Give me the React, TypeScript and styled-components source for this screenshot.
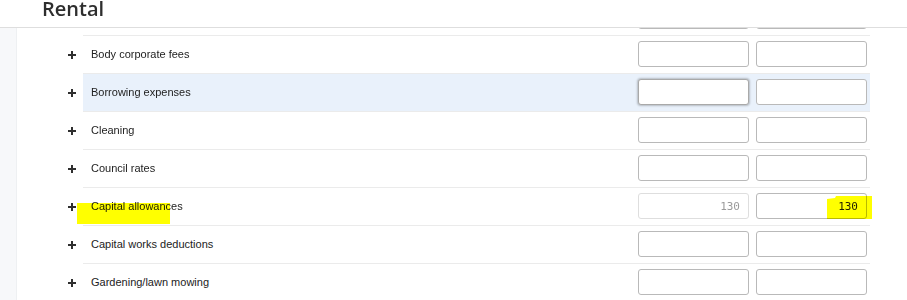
import React, { useLayoutEffect, useRef } from 'react';
import styled, { createGlobalStyle, css } from 'styled-components';

const GlobalStyle = createGlobalStyle`
  html, body {
    margin: 0;
    padding: 0;
    background: #fff;
    font-family: "Liberation Sans", Arial, sans-serif;
  }
`;

interface Expense {
  label: string;
  owner?: string;
  total?: string;
  locked?: boolean;
  active?: boolean;
  marked?: boolean;
}

const expenses: Expense[] = [
  { label: 'Advertising for tenants' },
  { label: 'Body corporate fees' },
  { label: 'Borrowing expenses', active: true },
  { label: 'Cleaning' },
  { label: 'Council rates' },
  { label: 'Capital allowances', owner: '130', total: '130', locked: true, marked: true },
  { label: 'Capital works deductions' },
  { label: 'Gardening/lawn mowing' },
  { label: 'Insurance' },
];

const PlusIcon = () => (
  <svg width="8" height="8" viewBox="0 0 8 8" aria-hidden="true">
    <rect x="3" y="0" width="2" height="8" fill="#2f2f2f" />
    <rect x="0" y="3" width="8" height="2" fill="#2f2f2f" />
  </svg>
);

const App: React.FC = () => {
  const scrollRef = useRef<HTMLDivElement>(null);

  // the list is scrolled a little, so the first row sits under the header
  useLayoutEffect(() => {
    if (scrollRef.current) scrollRef.current.scrollTop = 31;
  }, []);

  return (
    <>
      <GlobalStyle />
      <Page>
        <Header>
          <Title>Rental</Title>
        </Header>
        <Body>
          <Sidebar />
          <Scroll ref={scrollRef}>
            <List>
              {expenses.map((item) => (
                <Item key={item.label}>
                  <Toggle>
                    <PlusIcon />
                  </Toggle>
                  <Row $active={item.active}>
                    <Label>{item.label}</Label>
                    <Inputs>
                      <Amount
                        type="text"
                        readOnly
                        value={item.owner ?? ''}
                        $locked={item.locked}
                        $focused={item.active}
                      />
                      <Amount type="text" readOnly value={item.total ?? ''} />
                    </Inputs>
                    {item.marked && (
                      <>
                        <LabelMark />
                        <ValueMark />
                      </>
                    )}
                  </Row>
                </Item>
              ))}
            </List>
          </Scroll>
        </Body>
      </Page>
    </>
  );
};

const Page = styled.div`
  display: flex;
  flex-direction: column;
  height: 300px;
  overflow: hidden;
`;

const Header = styled.header`
  height: 27px;
  padding-left: 42px;
  border-bottom: 1px solid #dedede;
  background: #fff;
`;

const Title = styled.h1`
  margin: 0;
  font-family: "Open Sans", "Liberation Sans", sans-serif;
  font-size: 20px;
  font-weight: 600;
  line-height: 17px;
  color: #2e2e2e;
`;

const Body = styled.div`
  display: flex;
  flex: 1;
  min-height: 0;
`;

const Sidebar = styled.aside`
  width: 17px;
  flex-shrink: 0;
  background: #f7f8fa;
  border-right: 1px solid #eef0f2;
  box-sizing: border-box;
`;

const Scroll = styled.div`
  flex: 1;
  overflow: hidden;
`;

const List = styled.div`
  display: flex;
  flex-direction: column;
  padding-bottom: 40px;
`;

const Item = styled.div`
  display: flex;
  align-items: stretch;
`;

const Toggle = styled.div`
  width: 66px;
  flex-shrink: 0;
  display: flex;
  align-items: center;
  justify-content: flex-end;
  padding: 2px 7px 0 0;
  box-sizing: border-box;
`;

const Row = styled.div<{ $active?: boolean }>`
  position: relative;
  width: 787px;
  height: 38px;
  box-sizing: border-box;
  display: flex;
  align-items: center;
  padding: 5px 3px 6px 8px;
  border-top: 1px solid #ebebeb;
  background: ${(p) => (p.$active ? '#e9f1fb' : '#fff')};
`;

const Label = styled.span`
  flex: 1;
  font-size: 11px;
  color: #222;
`;

const Inputs = styled.div`
  display: flex;
  gap: 7px;
`;

const Amount = styled.input<{ $locked?: boolean; $focused?: boolean }>`
  width: 111px;
  height: 26px;
  box-sizing: border-box;
  padding: 0 8px;
  border: 1px solid #b9b9b9;
  border-radius: 3px;
  background: #fff;
  outline: none;
  text-align: right;
  font-family: "DejaVu Sans Mono", "Liberation Mono", monospace;
  font-size: 11px;
  color: #222;

  ${(p) =>
    p.$locked &&
    css`
      border-color: #dedede;
      color: #9a9a9a;
    `}

  ${(p) =>
    p.$focused &&
    css`
      border-color: #a9a9a9;
      box-shadow: 0 0 2px 1px rgba(0, 0, 0, 0.22);
    `}
`;

const Mark = styled.span`
  position: absolute;
  background: #ffff00;
  mix-blend-mode: multiply;
  pointer-events: none;
`;

const LabelMark = styled(Mark)`
  left: -6px;
  top: 15px;
  width: 93px;
  height: 21px;
`;

const ValueMark = styled(Mark)`
  left: 744px;
  top: 8px;
  width: 45px;
  height: 23px;
  clip-path: polygon(9px 0, 100% 0, 100% 100%, 0 100%, 0 3px, 8px 2px);
`;

export default App;
